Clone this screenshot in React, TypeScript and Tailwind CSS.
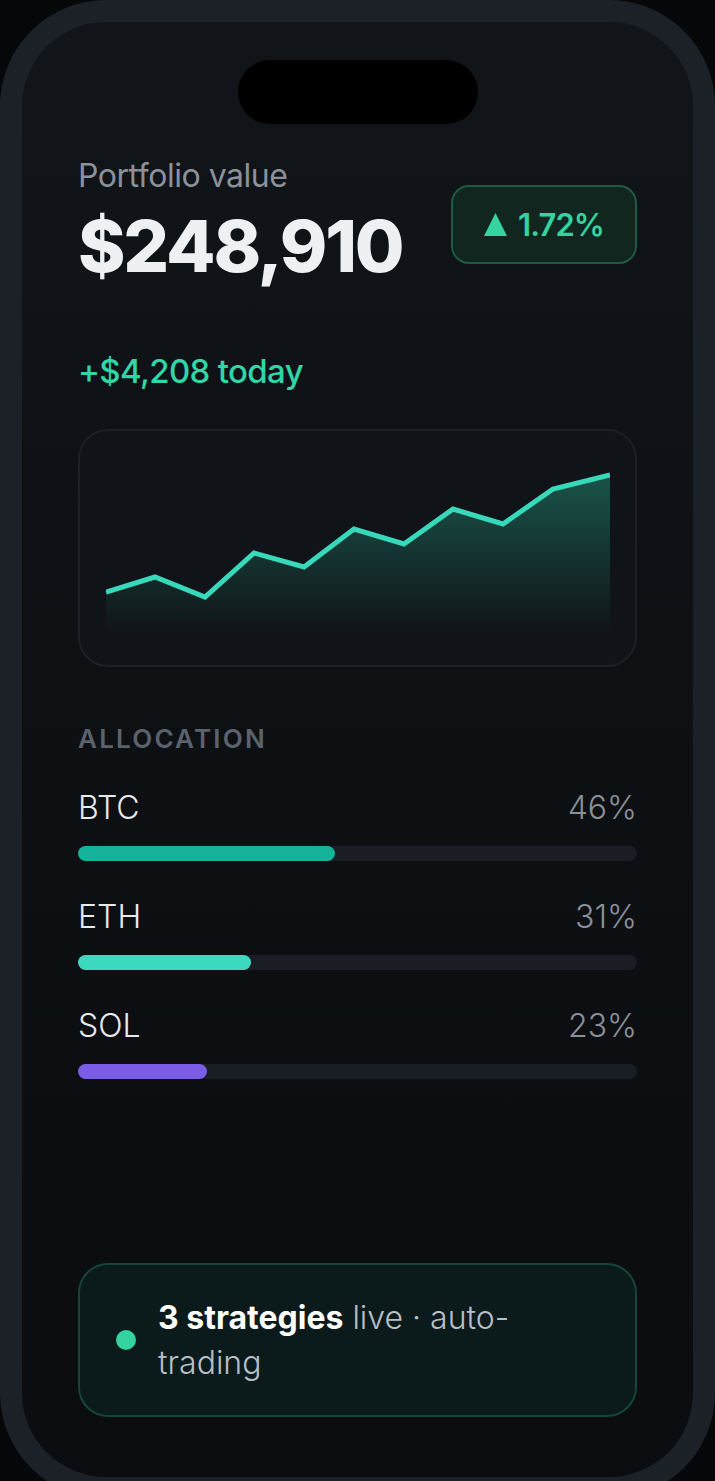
import React from 'react';

const holdings = [
  { sym: 'BTC', pct: 46, bar: 'bg-[#14b39a]' },
  { sym: 'ETH', pct: 31, bar: 'bg-[#3dd9bf]' },
  { sym: 'SOL', pct: 23, bar: 'bg-[#7b5ce6]' },
];

// sparkline points, in the svg's own 504x182 box
const pts: [number, number][] = [
  [0, 135], [49, 120], [99, 140], [148, 96], [198, 110], [248, 72],
  [298, 87], [347, 52], [397, 67], [447, 32], [504, 18],
];

function Sparkline() {
  const line = pts.map(([x, y], i) => `${i ? 'L' : 'M'}${x},${y}`).join(' ');
  const area = `${line} L504,177 L0,177 Z`;
  return (
    <svg width="504" height="182" viewBox="0 0 504 182" className="block">
      <defs>
        <linearGradient id="fill" x1="0" y1="0" x2="0" y2="1">
          <stop offset="0%" stopColor="#1c6a5a" stopOpacity="0.75" />
          <stop offset="100%" stopColor="#1c6a5a" stopOpacity="0" />
        </linearGradient>
      </defs>
      <path d={area} fill="url(#fill)" />
      <path d={line} fill="none" stroke="#38d9bb" strokeWidth="5" strokeLinejoin="miter" />
    </svg>
  );
}

export default function App() {
  return (
    <div className="min-h-screen bg-[#060709] overflow-hidden" style={{ fontFamily: 'Inter, "Noto Sans", sans-serif' }}>
      <div className="w-[715px] h-[1499px] rounded-[106px] bg-[#1c2027] p-[22px]">
        <div className="h-full rounded-[84px] bg-gradient-to-b from-[#111418] to-[#0a0c0f] flex flex-col px-[56px] pb-[60px]">
          {/* dynamic island */}
          <div className="mx-auto mt-[38px] h-[64px] w-[240px] rounded-full bg-black shrink-0" />

          <div className="mt-[36px] flex justify-between items-start">
            <div>
              <p className="text-[32px] leading-none text-[#8b919a] tracking-[-0.015em]">Portfolio value</p>
              <p className="mt-[18px] text-[72px] leading-none font-extrabold text-[#eef0f3] tracking-[-0.03em]">$248,910</p>
            </div>
            <div className="mt-[25px] h-[79px] w-[186px] rounded-[18px] border-2 border-[#1f5a46] bg-[#122620] flex items-center justify-center gap-[11px]">
              <svg width="23" height="23" viewBox="0 0 23 23">
                <path d="M11.5 0 L23 23 L0 23 Z" fill="#34d3a0" />
              </svg>
              <span className="text-[31px] leading-none font-semibold text-[#34d3a0] tracking-[-0.03em]">1.72%</span>
            </div>
          </div>

          <p className="mt-[73px] text-[33px] leading-none font-medium text-[#2fd6a7] tracking-[-0.02em]">+$4,208 today</p>

          <div className="mt-[41px] h-[238px] rounded-[30px] border-2 border-[#1d2025] bg-[#101317] pl-[26px] pt-[26px]">
            <Sparkline />
          </div>

          <p className="mt-[59px] text-[26px] leading-none font-semibold text-[#5b626d] tracking-[0.085em]">ALLOCATION</p>

          <div className="mt-[40px] flex flex-col gap-[40px]">
            {holdings.map((h) => (
              <div key={h.sym}>
                <div className="flex justify-between items-center text-[32px] leading-none font-light">
                  <span className="text-[#e8eaed]">{h.sym}</span>
                  <span className="text-[#8a9099]">{h.pct}%</span>
                </div>
                <div className="mt-[22px] h-[15px] rounded-full bg-[#1a1d24]">
                  <div className={`h-full rounded-full ${h.bar}`} style={{ width: `${h.pct}%` }} />
                </div>
              </div>
            ))}
          </div>

          <div className="mt-auto rounded-[30px] border-2 border-[#15463a] bg-[#0b1a1a] px-[36px] py-[30px] flex items-center gap-[22px]">
            <span className="w-[20px] h-[20px] rounded-full bg-[#34d3a0] shrink-0" />
            <p className="max-w-[420px] text-[32px] leading-[45px] font-light text-[#b9bfc7]">
              <b className="font-bold text-white">3 strategies</b> live · auto-trading
            </p>
          </div>
        </div>
      </div>
    </div>
  );
}
